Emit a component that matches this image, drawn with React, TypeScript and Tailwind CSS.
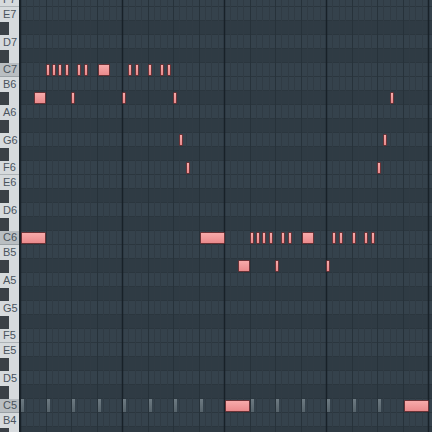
import React from "react";

const ROWS = [
  "F7", "E7", "D#7", "D7", "C#7", "C7", "B6", "A#6", "A6", "G#6", "G6", "F#6", "F6",
  "E6", "D#6", "D6", "C#6", "C6", "B5", "A#5", "A5", "G#5", "G5", "F#5", "F5",
  "E5", "D#5", "D5", "C#5", "C5", "B4", "A#4",
];

const ROW_H = 14;
const STEP = 6.375;
const TOP = -7;

type Note = { row: number; step: number; len?: number };

const tick = (row: number, steps: number[]): Note[] => steps.map((step) => ({ row, step }));

const notes: Note[] = [
  ...tick(5, [4, 5, 6, 7, 9, 10, 17, 18, 20, 22, 23]),
  { row: 5, step: 12, len: 2 },
  { row: 7, step: 2, len: 2 },
  ...tick(7, [8, 16, 24, 58]),
  ...tick(10, [25, 57]),
  ...tick(12, [26, 56]),
  { row: 17, step: 0, len: 4 },
  { row: 17, step: 28, len: 4 },
  { row: 17, step: 44, len: 2 },
  ...tick(17, [36, 37, 38, 39, 41, 42, 49, 50, 52, 54, 55]),
  { row: 19, step: 34, len: 2 },
  ...tick(19, [40, 48]),
  { row: 29, step: 32, len: 4 },
  { row: 29, step: 60, len: 4 },
];

const ghostBeats = [0, 1, 2, 3, 4, 5, 6, 7, 9, 10, 11, 12, 13, 14];

const isBlack = (n: string) => n.includes("#");

const Keyboard = () => (
  <div className="flex w-[20px] shrink-0 flex-col border-r border-[#1b232a] bg-[#d6dadd]" style={{ marginTop: TOP }}>
    {ROWS.map((name) => {
      const black = isBlack(name);
      const isC = name.startsWith("C") && !black;
      const edge = isC ? "border-b border-[#9aa1a6]" : name.startsWith("F") && !black ? "border-b border-[#aeb4b8]" : "";
      return (
        <div
          key={name}
          className={`relative flex h-[14px] shrink-0 items-center ${isC ? "bg-[#b9bec2]" : "bg-[#d6dadd]"} ${edge}`}
        >
          {black ? (
            <div className="h-[13px] w-[9px] bg-[#3a4046]" />
          ) : (
            <span className="pl-[3px] text-[11px] leading-none text-[#4a545d] [font-family:'Liberation_Sans',Arial,sans-serif]">
              {name}
            </span>
          )}
        </div>
      );
    })}
  </div>
);

const GridLines = () => {
  const lines = [];
  for (let s = 0; s <= 66; s++) {
    const x = Math.round(s * STEP) + 0.5;
    const color = s % 16 === 0 ? "#182128" : s % 4 === 0 ? "#27323a" : "#303b44";
    lines.push(<line key={s} x1={x} x2={x} y1={0} y2={432} stroke={color} strokeWidth={s % 16 === 0 ? 1.5 : 1} />);
  }
  return (
    <svg className="pointer-events-none absolute inset-0" width="412" height="432">
      {lines}
    </svg>
  );
};

export default function App() {
  return (
    <div className="flex h-[432px] w-[432px] overflow-hidden bg-[#34414b]">
      <Keyboard />
      <div className="relative h-[432px] flex-1 overflow-hidden">
        <div className="flex flex-col" style={{ marginTop: TOP }}>
          {ROWS.map((name) => (
            <div
              key={name}
              className={`h-[14px] shrink-0 border-b border-[#2b363e] ${isBlack(name) ? "bg-[#2f3b44]" : "bg-[#35424c]"}`}
            />
          ))}
        </div>
        <GridLines />
        {ghostBeats.map((b) => (
          <div
            key={b}
            className="absolute h-[13px] w-[3px] bg-gradient-to-b from-[#6d7a82] to-[#56636b]"
            style={{ left: Math.round(b * 4 * STEP) + 1, top: 29 * ROW_H + TOP }}
          />
        ))}
        {notes.map((n, i) => {
          const len = n.len ?? 0;
          const left = len ? Math.round(n.step * STEP) + 1 : Math.round(n.step * STEP);
          const width = len ? Math.round(len * STEP) - 1 : 4;
          return (
            <div
              key={i}
              className="absolute h-[12px] rounded-[1px] border border-[#6a3236] bg-gradient-to-b from-[#f7aaaa] to-[#ea8a8c]"
              style={{ left, width, top: n.row * ROW_H + TOP + 1 }}
            />
          );
        })}
      </div>
    </div>
  );
}
